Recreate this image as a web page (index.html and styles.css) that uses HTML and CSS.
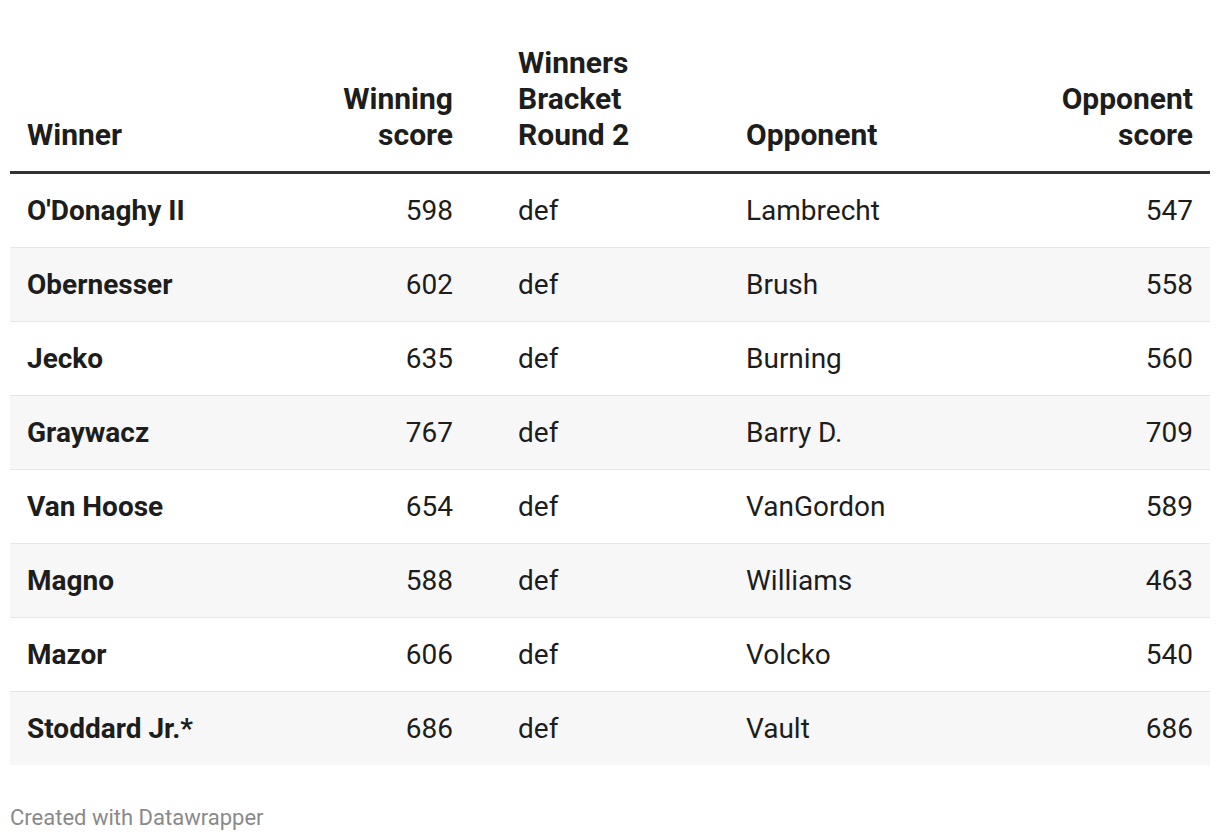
FILE: index.html
```html
<!DOCTYPE html>
<html lang="en">
<head>
<meta charset="utf-8">
<title>Winners Bracket Round 2</title>
<link rel="stylesheet" href="styles.css">
</head>
<body>
<div class="wrap">
  <table class="dw-table">
    <colgroup>
      <col class="c1"><col class="c2"><col class="c3"><col class="c4"><col class="c5">
    </colgroup>
    <thead>
      <tr>
        <th class="left">Winner</th>
        <th class="right">Winning<br>score</th>
        <th class="left mid">Winners<br>Bracket<br>Round 2</th>
        <th class="left">Opponent</th>
        <th class="right">Opponent<br>score</th>
      </tr>
    </thead>
    <tbody>
      <tr><td class="name">O'Donaghy II</td><td class="right">598</td><td class="mid">def</td><td>Lambrecht</td><td class="right">547</td></tr>
      <tr><td class="name">Obernesser</td><td class="right">602</td><td class="mid">def</td><td>Brush</td><td class="right">558</td></tr>
      <tr><td class="name">Jecko</td><td class="right">635</td><td class="mid">def</td><td>Burning</td><td class="right">560</td></tr>
      <tr><td class="name">Graywacz</td><td class="right">767</td><td class="mid">def</td><td>Barry D.</td><td class="right">709</td></tr>
      <tr><td class="name">Van Hoose</td><td class="right">654</td><td class="mid">def</td><td>VanGordon</td><td class="right">589</td></tr>
      <tr><td class="name">Magno</td><td class="right">588</td><td class="mid">def</td><td>Williams</td><td class="right">463</td></tr>
      <tr><td class="name">Mazor</td><td class="right">606</td><td class="mid">def</td><td>Volcko</td><td class="right">540</td></tr>
      <tr><td class="name">Stoddard Jr.*</td><td class="right">686</td><td class="mid">def</td><td>Vault</td><td class="right">686</td></tr>
    </tbody>
  </table>
  <div class="footer">Created with Datawrapper</div>
</div>
</body>
</html>
```

FILE: styles.css
```css
html, body {
  margin: 0;
  padding: 0;
  background: #ffffff;
}
body {
  font-family: Roboto, "Liberation Sans", Arial, sans-serif;
  color: #1d1d1d;
}
.wrap {
  padding: 30px 10px 0 10px;
}
.dw-table {
  width: 1200px;
  border-collapse: collapse;
  table-layout: fixed;
  font-size: 28px;
  line-height: 36px;
}
.c1 { width: 290px; }
.c2 { width: 170px; }
.c3 { width: 259px; }
.c4 { width: 291px; }
.c5 { width: 190px; }

th {
  font-weight: 700;
  font-size: 30px;
  line-height: 36px;
  vertical-align: bottom;
  padding: 15px 17px 18px 17px;
  border-bottom: 3px solid #333333;
}
td {
  padding: 19px 17px 18px 17px;
  border-bottom: 1px solid #e6e6e6;
  vertical-align: middle;
  white-space: nowrap;
}
tbody tr:nth-child(even) td {
  background: #f7f7f7;
}
tbody tr:last-child td {
  border-bottom: none;
}
.left { text-align: left; }
.right { text-align: right; }
.mid { padding-left: 48px; }
td.name { font-weight: 700; }

.footer {
  margin-top: 40px;
  font-size: 22px;
  color: #8a8a8a;
}
```
